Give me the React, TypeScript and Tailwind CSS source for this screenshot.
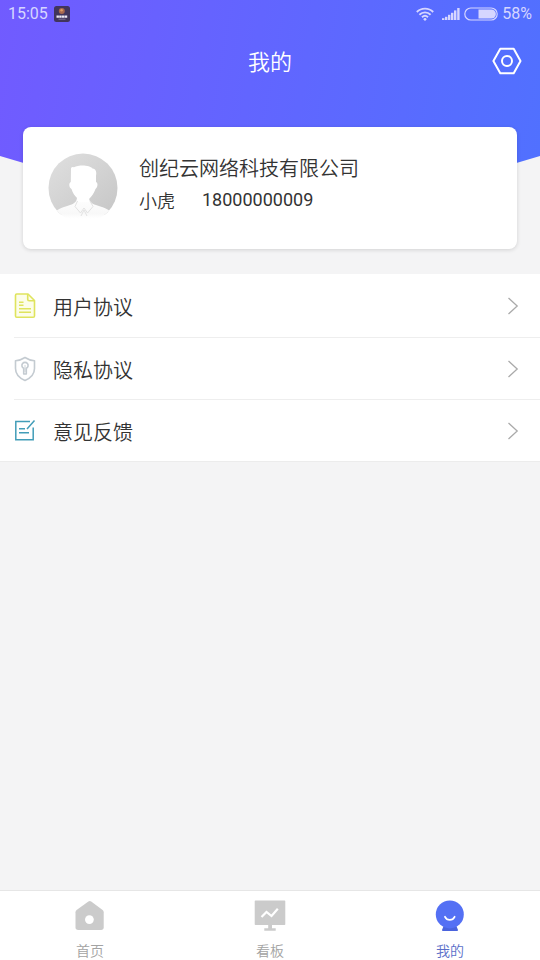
import React from 'react';

function WifiIcon() {
  return (
    <svg viewBox="0 0 18 14" className="h-[14px] w-[18px]" fill="none" stroke="currentColor" strokeWidth="1.9" aria-hidden="true">
      <path d="M0.8 5C5.3 0.5 12.7 0.5 17.2 5" />
      <path d="M3.4 7.7C6.6 4.6 11.4 4.6 14.6 7.7" />
      <path d="M6 10.2C7.8 8.5 10.2 8.5 12 10.2" />
      <circle cx="9" cy="12.3" r="1.4" fill="currentColor" stroke="none" />
    </svg>
  );
}

function SignalIcon() {
  return (
    <svg viewBox="0 0 18 12" className="h-3 w-[18px]" fill="currentColor" aria-hidden="true">
      <rect x="0" y="10.2" width="2.4" height="1.8" />
      <rect x="3" y="8.8" width="2.4" height="3.2" />
      <rect x="6" y="6.8" width="2.4" height="5.2" />
      <rect x="9" y="4.8" width="2.4" height="7.2" />
      <rect x="12" y="2.4" width="2.4" height="9.6" />
      <rect x="15.2" y="0" width="2.4" height="12" />
    </svg>
  );
}

function BatteryIcon() {
  return (
    <svg viewBox="0 0 34 14" className="h-[14px] w-[34px]" aria-hidden="true">
      <rect x="0.8" y="1" width="32.4" height="12" rx="6" fill="none" stroke="currentColor" strokeWidth="1.2" />
      <path d="M14.5 2.4H27.3A4.6 4.6 0 0 1 27.3 11.6H14.5Z" fill="currentColor" />
    </svg>
  );
}

function AppBadge() {
  return (
    <svg viewBox="0 0 16 16" className="size-4" aria-hidden="true">
      <rect width="16" height="16" rx="2.5" fill="#41355c" />
      <circle cx="7.8" cy="5" r="3" fill="#a8674f" />
      <circle cx="7.6" cy="4.2" r="1.2" fill="#dc9a62" />
      <path d="M2.5 10.7H13.5" stroke="#eeeaf5" strokeWidth="2.2" strokeDasharray="2.4 0.3" />
      <path d="M4.5 13.2H11.5" stroke="#8f84a5" strokeWidth="0.8" />
    </svg>
  );
}

function SettingsIcon() {
  return (
    <svg viewBox="0 0 30 28" className="h-7 w-[30px]" fill="none" stroke="currentColor" strokeWidth="2" strokeLinejoin="round" aria-hidden="true">
      <path d="M8.3 1.7H21.7L28.5 14L21.7 26.2H8.3L1.4 14Z" />
      <circle cx="15" cy="14" r="5" />
    </svg>
  );
}

function Avatar() {
  return (
    <svg viewBox="0 0 70 70" className="size-[70px] shrink-0" role="img" aria-label="头像">
      <defs>
        <linearGradient id="avatarBg" x1="0" y1="0" x2="1" y2="1">
          <stop offset="0" stopColor="#e0e0e0" />
          <stop offset="1" stopColor="#c6c6c6" />
        </linearGradient>
        <linearGradient id="avatarShirt" x1="0" y1="0" x2="0" y2="1">
          <stop offset="0" stopColor="#ffffff" />
          <stop offset="0.6" stopColor="#f8f8f8" />
          <stop offset="0.8" stopColor="#ffffff" />
        </linearGradient>
        <clipPath id="avatarClip">
          <circle cx="35" cy="35" r="34.5" />
        </clipPath>
      </defs>
      <g clipPath="url(#avatarClip)">
        <path d="M0 0H70V62H0Z" fill="url(#avatarBg)" />
        <path d="M0 64C6 58 12 55 22 52C27 50.5 29 48 29 44H41C41 48 43 50.5 48 52C58 55 64 58 70 64V71H0Z" fill="url(#avatarShirt)" />
        <path
          d="M23 15.5Q23.5 13.5 26 14.2C31 11.5 42 12 44.5 15.5C48 16 48.8 19 48 23V29C50.5 30 49.5 34.5 47.5 36C46 40.5 43.5 43.5 41 46V49H30V46C27 43 24.5 40 23.5 36C21 34.5 20.5 30 22.8 29Z"
          fill="#ffffff"
        />
        <path d="M29.5 48L27 53.5L32.5 60L36 55L39.5 60L45 53.5L42 48M33 63L36 57L39 63" fill="none" stroke="#e2e2e2" strokeWidth="1" />
      </g>
    </svg>
  );
}

function DocumentIcon() {
  return (
    <svg viewBox="0 0 22 26" className="h-[26px] w-[22px]" fill="none" stroke="#dfe45d" strokeWidth="1.6" strokeLinejoin="round" aria-hidden="true">
      <path d="M1.5 2.2Q1.5 1 2.7 1H14L20.5 7.5V23Q20.5 24.3 19.2 24.3H2.7Q1.5 24.3 1.5 23Z" fill="#fcfde9" />
      <path d="M13.7 1V6.2Q13.7 7.7 15.2 7.7H20.5" />
      <path d="M5 9.2H9.5M5 12.2H9.5M5 15.8H17M5 19.2H17" />
    </svg>
  );
}

function ShieldIcon() {
  return (
    <svg viewBox="0 0 22 26" className="h-[26px] w-[22px]" fill="none" stroke="#c4cbd1" strokeWidth="1.6" strokeLinejoin="round" aria-hidden="true">
      <path d="M11 1.5C14 3.5 17 4.5 20.5 4.7V12.5C20.5 18 16.8 22 11 24.5C5.2 22 1.5 18 1.5 12.5V4.7C5 4.5 8 3.5 11 1.5Z" />
      <path d="M9.7 12.3A3.1 3.1 0 1 1 12.3 12.3V18H9.7Z" />
      <path d="M11 9V16" strokeWidth="0.8" />
    </svg>
  );
}

function FeedbackIcon() {
  return (
    <svg viewBox="0 0 22 26" className="h-[26px] w-[22px]" fill="none" stroke="#429db8" strokeWidth="1.5" aria-hidden="true">
      <path d="M16 3.5H1.8V21.7H19.2V9.5" />
      <path d="M20.5 2.5L13 11M5 10.8H11M5 14.8H15" />
    </svg>
  );
}

function ChevronIcon() {
  return (
    <svg viewBox="0 0 12 18" className="h-[18px] w-3" fill="none" stroke="#aaaaaa" strokeWidth="1.3" aria-hidden="true">
      <path d="M1.5 1L10.2 9L1.5 17" />
    </svg>
  );
}

function HomeIcon() {
  return (
    <svg viewBox="0 0 32 32" className="size-8" fill="#cbcbcb" aria-hidden="true">
      <path d="M14.4 1.4Q15.8 0.4 17.2 1.4L28.6 10Q29.7 10.9 29.7 12.3V27.3Q29.7 30 27 30H4.2Q1.5 30 1.5 27.3V12.3Q1.5 10.9 2.6 10Z" />
      <circle cx="15.4" cy="19.6" r="4.4" fill="#ffffff" />
    </svg>
  );
}

function BoardIcon() {
  return (
    <svg viewBox="0 0 32 32" className="size-8" fill="#cbcbcb" aria-hidden="true">
      <path d="M1.5 0.5H30.5Q31.3 0.5 31.3 1.3V24.2Q31.3 25 30.5 25H18V28.3H21.7V30.8H10.3V28.3H14.2V25H1.5Q0.7 25 0.7 24.2V1.3Q0.7 0.5 1.5 0.5Z" />
      <path d="M7.5 17L12.5 12L17.5 16L23.8 8.8" fill="none" stroke="#ffffff" strokeWidth="2.2" />
    </svg>
  );
}

function MineIcon() {
  return (
    <svg viewBox="0 0 32 32" className="size-8" aria-hidden="true">
      <path d="M10 25H22L23.8 29.5V31H8.2V29.5Z" fill="#4a63dd" />
      <circle cx="15.8" cy="14.4" r="14" fill="#5470f4" />
      <path d="M11 16.8C13 20.8 18.6 20.8 20.6 16.8" fill="none" stroke="#ffffff" strokeWidth="1.8" strokeLinecap="round" />
    </svg>
  );
}

const menuItems = [
  { label: '用户协议', href: '#terms', icon: <DocumentIcon /> },
  { label: '隐私协议', href: '#privacy', icon: <ShieldIcon /> },
  { label: '意见反馈', href: '#feedback', icon: <FeedbackIcon /> },
];

const tabs = [
  { label: '首页', href: '#home', icon: <HomeIcon />, active: false },
  { label: '看板', href: '#board', icon: <BoardIcon />, active: false },
  { label: '我的', href: '#mine', icon: <MineIcon />, active: true },
];

function StatusBar() {
  return (
    <div className="flex h-7 items-center justify-between px-2 font-[Roboto,sans-serif] text-[16px] font-normal text-[#d6d6ff]">
      <div className="flex items-center gap-1.5">
        <span>15:05</span>
        <AppBadge />
      </div>
      <div className="flex items-center">
        <WifiIcon />
        <span className="ml-2">
          <SignalIcon />
        </span>
        <span className="mx-1">
          <BatteryIcon />
        </span>
        <span>58%</span>
      </div>
    </div>
  );
}

export default function App() {
  return (
    <div className="flex min-h-screen flex-col bg-[#f4f4f5] font-['Noto_Sans_CJK_SC',sans-serif] font-[350] text-[#333333]">
      <header className="h-[236px] bg-[linear-gradient(100deg,#715bff,#5071ff)] [clip-path:polygon(0_0,100%_0,100%_156px,50%_100%,0_156px)]">
        <StatusBar />
        <div className="grid h-[66px] grid-cols-[1fr_auto_1fr] items-center px-[18px] text-white">
          <h1 className="col-start-2 pb-0.5 text-[22px] font-[350]">我的</h1>
          <button type="button" aria-label="设置" className="justify-self-end">
            <SettingsIcon />
          </button>
        </div>
      </header>

      <section className="relative mx-[23px] -mt-[109px] flex h-[122px] items-start rounded-lg bg-white pt-[26px] pl-[25px] shadow-[0_1px_4px_rgba(0,0,0,0.14)]">
        <Avatar />
        <div className="ml-[21px] pt-px">
          <p className="text-[20px] leading-7">创纪云网络科技有限公司</p>
          <p className="mt-1 flex gap-[27px] text-[18px] leading-7">
            <span>小虎</span>
            <span className="font-[Roboto,sans-serif] font-normal">18000000009</span>
          </p>
        </div>
      </section>

      <nav className="mt-[25px] border-b border-[#ececec] bg-white">
        {menuItems.map((item, i) => (
          <a key={item.href} href={item.href} className="block pl-[14px]">
            <div className={`flex items-center pr-[21px] ${i > 0 ? 'h-[62px] border-t border-[#eeeeee]' : 'h-[63px]'}`}>
              {item.icon}
              <span className="ml-[17px] flex-1 pt-0.5 text-[20px]/8">{item.label}</span>
              <ChevronIcon />
            </div>
          </a>
        ))}
      </nav>

      <nav className="mt-auto grid h-[70px] grid-cols-3 border-t border-[#e6e6e6] bg-white">
        {tabs.map((tab) => (
          <a
            key={tab.href}
            href={tab.href}
            aria-current={tab.active ? 'page' : undefined}
            className={`flex flex-col items-center pt-[9px] text-[14px] leading-5 ${tab.active ? 'text-[#5b6fc9]' : 'text-[#a3a3a3]'}`}
          >
            {tab.icon}
            <span className="mt-2">{tab.label}</span>
          </a>
        ))}
      </nav>
    </div>
  );
}
